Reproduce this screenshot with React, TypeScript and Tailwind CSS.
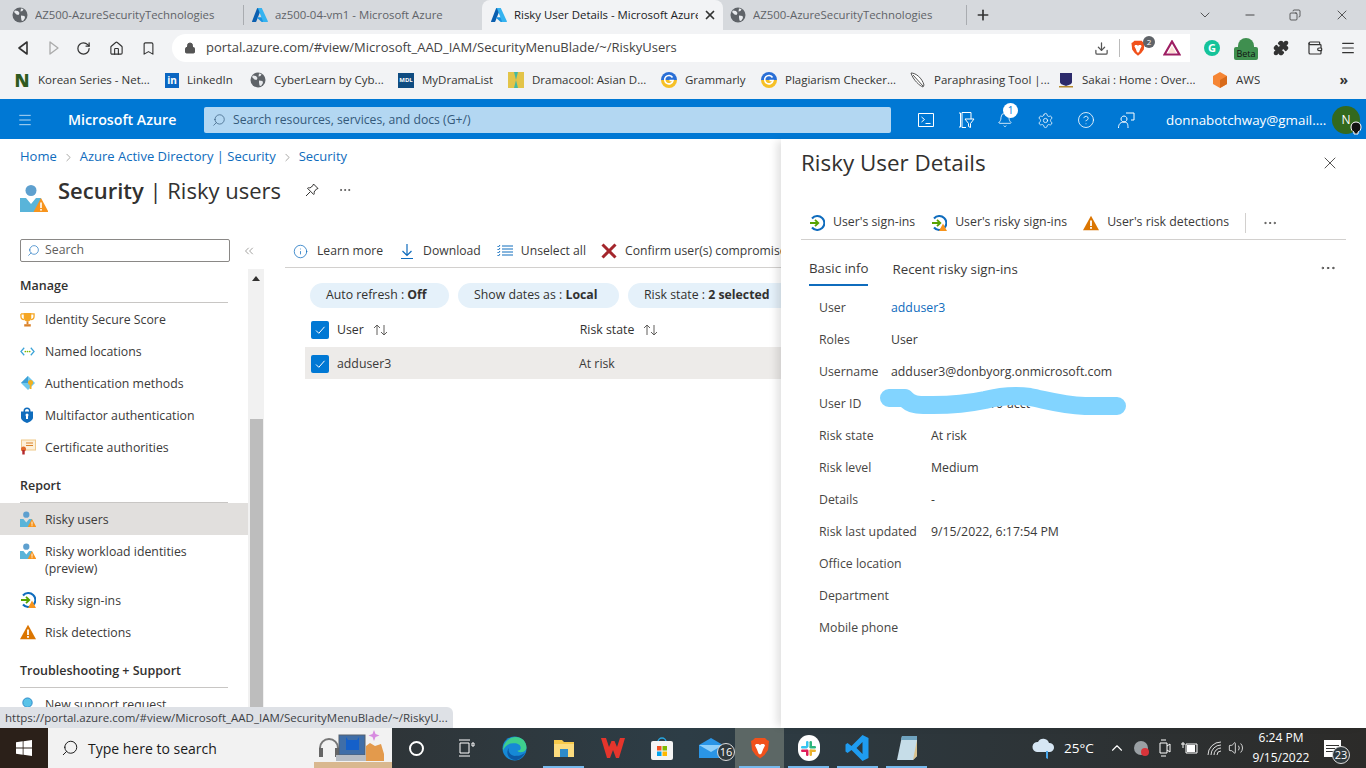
import React from "react";
import {
  Bell, Bookmark, ChevronDown, ChevronRight, ChevronsLeft, CircleHelp, Download, Ellipsis, Home, Info, Lock,
  Menu, Minus, Plus, Puzzle, RotateCw, Search, Settings, Wallet, X, ChevronUp, Volume2, Copy,
} from "lucide-react";

function AzureLogo({ size = 16 }: { size?: number }) {
  return (
    <svg width={size} height={size} viewBox="0 0 16 16" className="shrink-0">
      <path d="M5.6 1h4L4.3 14.6a.6.6 0 0 1-.6.4H.6a.5.5 0 0 1-.5-.7L5 1.4A.6.6 0 0 1 5.6 1z" fill="#0a5fb0" />
      <path d="M11.6 10.2H5.2a.3.3 0 0 0-.2.5l4.1 3.9c.2.2.4.3.6.3h5.7z" fill="#1b93e0" />
      <path d="M10 1.4a.6.6 0 0 0-.5-.4H5.5a.6.6 0 0 1 .5.4l5 13.2a.6.6 0 0 1-.5.4h4.9a.6.6 0 0 0 .5-.8z" fill="#35b3f0" />
    </svg>
  );
}

function GlobeIcon() {
  return (
    <svg width="16" height="16" viewBox="0 0 16 16" className="shrink-0">
      <circle cx="8" cy="8" r="7.5" fill="#5f6368" />
      <path d="M3 3.500l3 .5 1.500 2-1 2-2-.5-2.500-2.500zM9 1.500l2.500.5-1 2-2 .5zM9 8.500l3.500.5.500 2-2 3-1.500-.5-.5-3z" fill="#e8eaed" />
    </svg>
  );
}

function GrammarlyIcon() {
  return (
    <svg width="16" height="16" viewBox="0 0 16 16" className="shrink-0">
      <path d="M0 8a8 8 0 0 1 16 0z" fill="#2a6fd6" />
      <path d="M0 8a8 8 0 0 0 16 0z" fill="#f6c026" />
      <path d="M11.500 5.500A4.200 4.200 0 1 0 12 8.500H8.500" fill="none" stroke="#fff" strokeWidth="1.600" />
    </svg>
  );
}

function PersonRisk({ size = 18 }: { size?: number }) {
  return (
    <svg width={size} height={size} viewBox="0 0 28 28" className="shrink-0">
      <circle cx="11" cy="6.500" r="5.500" fill="#5ea0cf" />
      <path d="M0 28V14h6l5 6 5-6h5v4l-5 10z" fill="#59b4d9" />
      <path d="M21 14l7.500 14H13.500z" fill="#f7941d" />
      <rect x="20.200" y="18.500" width="1.600" height="5.500" fill="#fff" />
      <rect x="20.200" y="25" width="1.600" height="1.600" fill="#fff" />
    </svg>
  );
}

function Warning({ size = 16 }: { size?: number }) {
  return (
    <svg width={size} height={size} viewBox="0 0 16 16" className="shrink-0">
      <path d="M8 .8l8 14.400H0z" fill="#db7500" />
      <rect x="7.100" y="5.500" width="1.800" height="5.500" fill="#fff" />
      <rect x="7.100" y="12" width="1.800" height="1.800" fill="#fff" />
    </svg>
  );
}

function SignIn({ risky = false }: { risky?: boolean }) {
  return (
    <svg width="16" height="16" viewBox="0 0 16 16" className="shrink-0">
      <path d="M3 3.500A7 7 0 1 1 3 12.500" fill="none" stroke="#0f6cbd" strokeWidth="2" />
      <path d="M1 8h8M6 4.800L9.300 8 6 11.200" fill="none" stroke="#57a300" strokeWidth="1.800" />
      {risky && <path d="M12 8.500l4 7.500H8z" fill="#f7941d" />}
    </svg>
  );
}

function Trophy() {
  return (
    <svg width="15" height="15" viewBox="0 0 16 16" className="shrink-0">
      <path d="M1 2h14v2.500c0 2-1.500 3.500-3.500 3.500M1 2v2.500C1 6.500 2.500 8 4.500 8" fill="none" stroke="#f5a623" strokeWidth="1.400" />
      <path d="M4 1h8v5c0 2.200-1.800 4-4 4s-4-1.800-4-4z" fill="#f5a623" />
      <rect x="7" y="10" width="2" height="3" fill="#d9822b" />
      <rect x="4.500" y="13" width="7" height="2.500" fill="#d9822b" />
    </svg>
  );
}

function NamedLocations() {
  return (
    <svg width="15" height="15" viewBox="0 0 16 16" className="shrink-0">
      <path d="M4.500 4L1 8l3.500 4M11.500 4L15 8l-3.500 4" fill="none" stroke="#3ba3d8" strokeWidth="1.300" />
      <circle cx="5.700" cy="8" r=".9" fill="#7fba00" />
      <circle cx="8" cy="8" r=".9" fill="#7fba00" />
      <circle cx="10.300" cy="8" r=".9" fill="#7fba00" />
    </svg>
  );
}

function AuthMethods() {
  return (
    <svg width="16" height="16" viewBox="0 0 16 16" className="shrink-0">
      <path d="M8 1l7 7-7 7-7-7z" fill="#6fc8ee" />
      <path d="M8 1l-7 7h7z" fill="#3f9fd6" />
      <circle cx="10.500" cy="7.500" r="2.500" fill="#f2b01e" />
      <rect x="9.700" y="8" width="1.800" height="6" fill="#f2b01e" />
    </svg>
  );
}

function Mfa() {
  return (
    <svg width="14" height="16" viewBox="0 0 14 16" className="shrink-0">
      <path d="M7 .5a3.500 3.500 0 0 1 3.500 3.500v1H9V4a2 2 0 0 0-4 0v1H3.500V4A3.500 3.500 0 0 1 7 .5z" fill="#0f6cbd" />
      <path d="M1 4.500h12v6c0 2.500-3 4.500-6 5.500-3-1-6-3-6-5.500z" fill="#0f6cbd" />
      <circle cx="7" cy="8" r="1.500" fill="#fff" />
      <rect x="6" y="8.500" width="2" height="3.500" fill="#fff" />
    </svg>
  );
}

function Certificate() {
  return (
    <svg width="16" height="16" viewBox="0 0 16 16" className="shrink-0">
      <rect x="1.500" y="1" width="14" height="10" fill="#fdf0d8" stroke="#f0c98a" />
      <path d="M6 4h7M6 6.500h7" stroke="#d9822b" />
      <circle cx="3.500" cy="10" r="2.500" fill="#e06a2b" />
      <rect x="2.300" y="11" width="2.400" height="4.500" fill="#b4282d" />
    </svg>
  );
}

function Support() {
  return (
    <svg width="15" height="15" viewBox="0 0 16 16" className="shrink-0">
      <circle cx="8" cy="6" r="5" fill="#59c3e8" stroke="#2b88c8" />
      <path d="M2 16c0-3 2.500-5 6-5s6 2 6 5z" fill="#59c3e8" />
    </svg>
  );
}

function WindowsLogo() {
  return (
    <svg width="16" height="16" viewBox="0 0 16 16">
      <path d="M0 2.300L6.700 1.300V7.600H0zM7.500 1.200L16 0V7.600H7.500zM0 8.400H6.700V14.700L0 13.700zM7.500 8.400H16V16L7.500 14.800z" fill="#fff" />
    </svg>
  );
}

function BraveLion({ size = 20 }: { size?: number }) {
  return (
    <svg width={size} height={size} viewBox="0 0 20 22" className="shrink-0">
      <path d="M5 1h10l2 2 2 1-1 9-3.500 5L10 21.500 5.500 18 2 13 1 4l2-1z" fill="#f1511b" />
      <path d="M6 7l2.500 0 1.500 1 1.500-1H14l1 1.500-2 4-1.500 4-1.500 1-1.500-1-1.500-4-2-4z" fill="#fff" />
    </svg>
  );
}

const BOOKMARKS: { w: string; label: string; icon: React.ReactNode }[] = [
  {
    w: "w-[151px]", label: "Korean Series - Net...",
    icon: <span className="w-4 text-center font-black text-[18px] leading-4 text-[#2f5a20]">N</span>,
  },
  {
    w: "w-[85px]", label: "LinkedIn",
    icon: <span className="w-[14px] h-[15px] bg-[#0a66c2] text-white text-[10px] font-bold leading-[15px] text-center shrink-0">in</span>,
  },
  { w: "w-[148px]", label: "CyberLearn by Cyb...", icon: <GlobeIcon /> },
  {
    w: "w-[110px]", label: "MyDramaList",
    icon: <span className="w-4 h-[15px] bg-[#0f4c81] text-white text-[6px] font-bold leading-[15px] text-center shrink-0">MDL</span>,
  },
  {
    w: "w-[153px]", label: "Dramacool: Asian D...",
    icon: (
      <svg width="16" height="16" viewBox="0 0 16 16" className="shrink-0">
        <rect width="16" height="16" fill="#45b8a0" />
        <path d="M0 0h6l2 8-2 8H0zM16 0h-6L8 8l2 8h6z" fill="#e3c448" />
      </svg>
    ),
  },
  { w: "w-[100px]", label: "Grammarly", icon: <GrammarlyIcon /> },
  { w: "w-[149px]", label: "Plagiarism Checker...", icon: <GrammarlyIcon /> },
  {
    w: "w-[148px]", label: "Paraphrasing Tool |...",
    icon: (
      <svg width="16" height="16" viewBox="0 0 16 16" className="shrink-0">
        <path d="M1 1c5 0 11 5 13 12l-1 2C10 14 3 8 1 1zM3 3l10 11" fill="#fff" stroke="#555" />
      </svg>
    ),
  },
  {
    w: "w-[154px]", label: "Sakai : Home : Over...",
    icon: (
      <svg width="16" height="16" viewBox="0 0 16 16" className="shrink-0">
        <path d="M2 1h12v9c0 2-3 3-6 4-3-1-6-2-6-4z" fill="#2c2a6b" />
        <rect x="1" y="14" width="14" height="1.500" fill="#b68a2c" />
      </svg>
    ),
  },
  {
    w: "w-[70px]", label: "AWS",
    icon: (
      <svg width="16" height="16" viewBox="0 0 16 16" className="shrink-0">
        <path d="M8 0l7 4v8l-7 4-7-4V4z" fill="#f58534" />
        <path d="M8 8l7-4v8l-7 4z" fill="#d86a1a" />
      </svg>
    ),
  },
];

const MANAGE = [
  { label: "Identity Secure Score", icon: <Trophy /> },
  { label: "Named locations", icon: <NamedLocations /> },
  { label: "Authentication methods", icon: <AuthMethods /> },
  { label: "Multifactor authentication", icon: <Mfa /> },
  { label: "Certificate authorities", icon: <Certificate /> },
];

const DETAILS: { label: string; value?: string; link?: boolean }[] = [
  { label: "User", value: "adduser3", link: true },
  { label: "Roles", value: "User" },
  { label: "Username", value: "adduser3@donbyorg.onmicrosoft.com" },
  { label: "Risk state", value: "At risk" },
  { label: "Risk level", value: "Medium" },
  { label: "Details", value: "-" },
  { label: "Risk last updated", value: "9/15/2022, 6:17:54 PM" },
  { label: "Office location" },
  { label: "Department" },
  { label: "Mobile phone" },
];

function Tab({ title, active, azure, w, pad }: { title: string; active?: boolean; azure?: boolean; w: string; pad: string }) {
  return (
    <div className={`${w} ${pad} h-[30px] flex items-center shrink-0 ${active ? "bg-[#f2f3f5] rounded-t-lg text-[#202124]" : "text-[#5f6368]"}`}>
      {azure ? <AzureLogo /> : <GlobeIcon />}
      <span className="overflow-hidden whitespace-nowrap flex-1 text-[11.400px] ml-[7px]">{title}</span>
      {active && <X size={14} strokeWidth={3} className="mr-[6px] ml-[5px] text-[#333] shrink-0" />}
    </div>
  );
}

function MenuRow({ label, icon, active }: { label: string; icon: React.ReactNode; active?: boolean }) {
  return (
    <div className={`h-[32px] pl-[20px] flex items-center text-[12.300px] text-[#3b3a39] ${active ? "bg-[#e1dfdd]" : ""}`}>
      <span className="w-[25px] shrink-0 flex items-center">{icon}</span>
      <span className="mt-[2px]">{label}</span>
    </div>
  );
}

function SectionHead({ label, className }: { label: string; className: string }) {
  return (
    <div className={`ml-[20px] mr-[20px] h-[26px] border-b border-[#c8c6c4] text-[12.500px] font-semibold text-[#323130] flex items-start ${className}`}>
      {label}
    </div>
  );
}

function Pill({ label, value, w }: { label: string; value: string; w: string }) {
  return (
    <div className={`${w} h-[25px] pl-[16px] rounded-full bg-[#e5f1fa] flex items-center text-[12.300px] text-[#323130] shrink-0 whitespace-nowrap`}>
      {label} :&nbsp;<b className="font-bold">{value}</b>
    </div>
  );
}

function Check() {
  return (
    <span className="w-[18px] h-[18px] rounded-[2px] bg-[#0078d4] flex items-center justify-center shrink-0">
      <svg width="12" height="12" viewBox="0 0 12 12"><path d="M2 6.500L4.800 9.300 10.500 2.800" fill="none" stroke="#fff" strokeWidth="1" /></svg>
    </span>
  );
}

function SortArrows() {
  return (
    <svg width="18" height="14" viewBox="0 0 18 14" className="text-[#605e5c]">
      <path d="M5 12V2M2 5l3-3 3 3M12 2v10M9 9l3 3 3-3" fill="none" stroke="currentColor" strokeWidth="1" />
    </svg>
  );
}

function TaskItem({ children, active, running }: { children: React.ReactNode; active?: boolean; running?: boolean }) {
  return (
    <div className={`w-[49px] h-[40px] flex items-center justify-center shrink-0 relative ${active ? "bg-[#5c6765]" : ""}`}>
      {children}
      {running && <span className="absolute left-[4px] right-[4px] bottom-0 h-[2px] bg-[#76b9ed]" />}
    </div>
  );
}

export default function App() {
  return (
    <div className="w-[1366px] h-[768px] overflow-hidden relative flex flex-col bg-white text-[#323130] font-['Open_Sans',sans-serif]">
      {/* browser tabs */}
      <div className="h-[30px] bg-[#d6d9dd] flex items-center">
        <Tab w="w-[243px]" pad="pl-[12px]" title="AZ500-AzureSecurityTechnologies" />
        <span className="w-px h-[20px] bg-[#a9acb0]" />
        <Tab w="w-[238px]" pad="pl-[8px]" title="az500-04-vm1 - Microsoft Azure" azure />
        <Tab w="w-[241px]" pad="pl-[9px]" title="Risky User Details - Microsoft Azure" azure active />
        <Tab w="w-[243px]" pad="pl-[7px]" title="AZ500-AzureSecurityTechnologies" />
        <span className="w-px h-[20px] bg-[#a9acb0]" />
        <Plus size={16} strokeWidth={2.500} className="ml-[8px] text-[#333]" />
        <div className="ml-auto flex items-center text-[#333]">
          <ChevronDown size={16} strokeWidth={1.200} className="mr-[30px]" />
          <Minus size={14} strokeWidth={1.500} className="mr-[32px]" />
          <Copy size={12} strokeWidth={1.500} className="mr-[33px] -scale-x-100" />
          <X size={16} strokeWidth={1.200} className="mr-[16px]" />
        </div>
      </div>

      {/* address bar */}
      <div className="h-[36px] bg-[#f2f3f5] flex items-center">
        <div className="w-[172px] flex items-center text-[#333] shrink-0">
          <svg width="14" height="16" viewBox="0 0 14 16" className="ml-[16px]"><path d="M11 2L3 8l8 6z" fill="none" stroke="#333" strokeWidth="1.600" strokeLinejoin="round" /></svg>
          <svg width="14" height="16" viewBox="0 0 14 16" className="ml-[17px]"><path d="M3 2l8 6-8 6z" fill="none" stroke="#aaa" strokeWidth="1.300" strokeLinejoin="round" /></svg>
          <RotateCw size={15} strokeWidth={2} className="ml-[15px]" />
          <Home size={15} strokeWidth={1.800} className="ml-[18px]" />
          <Bookmark size={15} strokeWidth={1.800} className="ml-[17px]" />
        </div>
        <div className="w-[1018px] h-[28px] bg-white rounded-l-full rounded-r-lg flex items-center text-[13px] text-[#444]">
          <Lock size={12} fill="#555" className="ml-[12px] text-[#555]" />
          <span className="ml-[10px]">portal.azure.com/#view/Microsoft_AAD_IAM/SecurityMenuBlade/~/RiskyUsers</span>
          <Download size={15} className="ml-auto text-[#555]" />
          <span className="ml-[10px] w-px h-[18px] bg-[#bbb]" />
          <span className="ml-[10px] relative"><BraveLion size={16} />
            <span className="absolute -top-[4px] -right-[9px] w-[12px] h-[12px] rounded-full bg-[#5f6368] text-white text-[8px] leading-[12px] text-center">2</span>
          </span>
          <svg width="18" height="16" viewBox="0 0 18 16" className="ml-[17px] mr-[9px]"><path d="M9 1.500L16.500 14.500H1.500z" fill="none" stroke="#9e1f63" strokeWidth="2.200" /><path d="M9 6l4 7H5z" fill="#f15a29" fillOpacity=".2" /></svg>
        </div>
        <div className="flex-1 flex items-center text-[#333]">
          <span className="ml-[14px] w-[16px] h-[16px] rounded-full bg-[#15c39a] text-white text-[11px] font-bold leading-[16px] text-center">G</span>
          <span className="ml-[14px] relative w-[24px] h-[20px]">
            <span className="absolute left-[4px] top-0 w-[16px] h-[11px] rounded-t-full bg-[#3f8f4f]" />
            <span className="absolute left-0 top-[9px] w-[24px] h-[13px] bg-[#3f8f4f] rounded-[2px] text-[9px] leading-[13px] text-center text-[#111]">Beta</span>
          </span>
          <Puzzle size={16} fill="#333" className="ml-[15px]" />
          <Wallet size={16} strokeWidth={1.800} className="ml-[18px]" />
          <Menu size={16} strokeWidth={1.800} className="ml-[17px]" />
        </div>
      </div>

      {/* bookmarks */}
      <div className="h-[33px] pb-[5px] bg-[#f2f3f5] flex items-center pl-[14px] text-[11.500px] text-[#333]">
        {BOOKMARKS.map((b) => (
          <div key={b.label} className={`${b.w} flex items-center gap-[8px] shrink-0`}>
            {b.icon}
            <span className="truncate">{b.label}</span>
          </div>
        ))}
        <span className="ml-auto mr-[18px] font-bold text-[14px] leading-none">»</span>
      </div>

      {/* azure header */}
      <div className="h-[40px] pt-[2px] bg-[#0078d4] flex items-center text-white shrink-0">
        <Menu size={16} strokeWidth={1.500} className="ml-[17px] text-[#b3d7f2]" />
        <span className="ml-[35px] w-[136px] text-[14.200px] font-semibold">Microsoft Azure</span>
        <div className="w-[687px] h-[26px] bg-[#b3d7f2] rounded-[2px] flex items-center text-[12.200px] text-[#34597a]">
          <Search size={14} strokeWidth={1.200} className="ml-[8px] -scale-x-100" />
          <span className="ml-[7px]">Search resources, services, and docs (G+/)</span>
        </div>
        <svg width="16" height="16" viewBox="0 0 16 16" className="ml-[27px]"><path d="M.5 1.500h15v13H.5zM3.500 5l3 2.500-3 2.500M7.500 11.500h5" fill="none" stroke="#fff" /></svg>
        <svg width="18" height="18" viewBox="0 0 18 18" className="ml-[23px]"><path d="M2 2h1.500v14H2M5 1.500h9V8M5 16.500h4M5 1.500v15M8 8h9l-3.500 4.500v4l-2-1v-3z" fill="none" stroke="#fff" /></svg>
        <span className="ml-[22px] relative">
          <Bell size={16} strokeWidth={1.200} />
          <span className="absolute -top-[9px] left-[6px] w-[15px] h-[15px] rounded-full bg-white text-[#0078d4] text-[10px] leading-[15px] text-center">1</span>
        </span>
        <Settings size={17} strokeWidth={1.100} className="ml-[24px]" />
        <CircleHelp size={18} strokeWidth={1.100} className="ml-[23px]" />
        <svg width="18" height="18" viewBox="0 0 18 18" className="ml-[22px]"><path d="M9 2h8v7h-3M7 5a3 3 0 1 1-.01 0M1.500 17c0-4 2-6 5.500-6s4 2 4 6" fill="none" stroke="#fff" /></svg>
        <span className="ml-[31px] w-[166px] text-[13.400px] font-medium whitespace-nowrap">donnabotchway@gmail....</span>
        <span className="relative w-[28px] h-[28px] rounded-full bg-[#33691e] text-[12px] leading-[28px] text-center shrink-0">N
          <svg width="14" height="14" viewBox="0 0 14 14" className="absolute left-[17px] top-[15px]"><path d="M7 1C4 1 2 3 2 6c0 3 1.500 4.500 3 5v2h4v-2c1.500-.5 3-2 3-5 0-3-2-5-5-5z" fill="#111" stroke="#fff" /></svg>
        </span>
      </div>

      {/* main area */}
      <div className="flex-1 min-h-0 flex relative">
        <div className="w-[781px] shrink-0 overflow-hidden">
          <div className="pl-[20px] h-[36px] flex items-center gap-[5px] text-[13px] text-[#0f6cbd]">
            <span>Home</span>
            <ChevronRight size={13} strokeWidth={1} className="text-[#605e5c]" />
            <span>Azure Active Directory | Security</span>
            <ChevronRight size={13} strokeWidth={1} className="text-[#605e5c]" />
            <span>Security</span>
          </div>
          <div className="pl-[20px] h-[30px] flex items-center">
            <span className="mt-[16px]"><PersonRisk size={28} /></span>
            <span className="ml-[10px] text-[22px] text-[#323130] whitespace-nowrap"><b className="font-semibold">Security</b> | Risky users</span>
            <svg width="14" height="14" viewBox="0 0 14 14" className="ml-[24px]"><path d="M8.500 1l4.500 4.500-1.500.5L9 9c.5 1 .3 2-.3 2.500L2.500 5.300C3 4.700 4 4.500 5 5l3-2.500zM5 9l-4 4" fill="none" stroke="#323130" /></svg>
            <Ellipsis size={14} strokeWidth={1.200} className="ml-[19px] text-[#323130]" />
          </div>

          <div className="flex h-[523px]">
            {/* resource menu */}
            <div className="w-[264px] shrink-0 overflow-hidden">
              <div className="flex items-center mt-[34px] pl-[20px]">
                <div className="w-[210px] h-[23px] border border-[#8a8886] rounded-[2px] flex items-center text-[12.300px] text-[#605e5c]">
                  <Search size={13} strokeWidth={1.200} className="ml-[6px] -scale-x-100 text-[#0f6cbd]" />
                  <span className="ml-[5px]">Search</span>
                </div>
                <ChevronsLeft size={14} strokeWidth={1} className="ml-[12px] text-[#605e5c]" />
              </div>
              <div className="flex mt-[7px]">
                <div className="w-[248px] shrink-0">
                  <SectionHead label="Manage" className="mt-[8px]" />
                  {MANAGE.map((m) => <MenuRow key={m.label} {...m} />)}
                  <SectionHead label="Report" className="mt-[14px]" />
                  <MenuRow label="Risky users" icon={<PersonRisk size={16} />} active />
                  <div className="h-[49px] pl-[20px] flex text-[12.300px] text-[#3b3a39] leading-[17px] pt-[8px]">
                    <span className="w-[25px] shrink-0"><PersonRisk size={16} /></span>
                    <span>Risky workload identities<br />(preview)</span>
                  </div>
                  <MenuRow label="Risky sign-ins" icon={<SignIn risky />} />
                  <MenuRow label="Risk detections" icon={<Warning />} />
                  <SectionHead label="Troubleshooting + Support" className="mt-[14px]" />
                  <MenuRow label="New support request" icon={<Support />} />
                </div>
                <div className="w-[16px] h-[459px] bg-[#f1f1f1] flex flex-col items-center shrink-0">
                  <span className="mt-[7px] border-x-[4px] border-x-transparent border-b-[5px] border-b-[#323130]" />
                  <span className="mt-[138px] w-[13px] flex-1 bg-[#bdbdbd]" />
                </div>
              </div>
            </div>

            {/* blade content */}
            <div className="flex-1 min-w-0 pl-[21px] overflow-hidden">
              <div className="h-[63px] pt-[30px] border-b border-[#d2d0ce] flex items-center text-[12.200px] text-[#3b3a39] whitespace-nowrap">
                <Info size={15} strokeWidth={1.200} className="ml-[8px] text-[#0f6cbd] shrink-0" />
                <span className="ml-[9px]">Learn more</span>
                <svg width="14" height="17" viewBox="0 0 14 17" className="ml-[17px] shrink-0"><path d="M7 1v11M2.500 8L7 12.500 11.500 8M1 15.500h12" fill="none" stroke="#0f6cbd" strokeWidth="1.200" /></svg>
                <span className="ml-[9px]">Download</span>
                <svg width="16" height="14" viewBox="0 0 16 14" className="ml-[16px] shrink-0"><path d="M5 2h11M5 5h11M5 8h11M5 11h11M.5 2l1 1 1.500-2M.5 5l1 1 1.500-2M.5 8l1 1 1.500-2M.5 11l1 1 1.500-2" fill="none" stroke="#0f6cbd" /></svg>
                <span className="ml-[8px]">Unselect all</span>
                <svg width="16" height="16" viewBox="0 0 16 16" className="ml-[15px] shrink-0"><path d="M1.500 1.500l13 13M14.500 1.500l-13 13" stroke="#a4262c" strokeWidth="3" /></svg>
                <span className="ml-[8px]">Confirm user(s) compromised</span>
              </div>
              <div className="flex mt-[15px] ml-[25px] gap-[9px]">
                <Pill w="w-[139px]" label="Auto refresh" value="Off" />
                <Pill w="w-[161px]" label="Show dates as" value="Local" />
                <Pill w="w-[170px]" label="Risk state" value="2 selected" />
              </div>
              <div className="h-[39px] pt-[5px] ml-[26px] flex items-center text-[12.300px]">
                <Check />
                <span className="ml-[8px] font-medium">User</span>
                <span className="ml-[8px] w-[208px]"><SortArrows /></span>
                <span className="font-medium">Risk state</span>
                <span className="ml-[8px]"><SortArrows /></span>
              </div>
              <div className="h-[32px] pt-[2px] ml-[20px] bg-[#edebe9] flex items-center pl-[6px] text-[12.300px]">
                <Check />
                <span className="ml-[8px] w-[242px] text-[#3b3a39]">adduser3</span>
                <span className="text-[#3b3a39]">At risk</span>
              </div>
            </div>
          </div>
        </div>

        {/* details panel */}
        <div className="flex-1 min-w-0 bg-white shadow-[-6px_0_8px_-2px_rgba(0,0,0,0.12)] pl-[20px] pr-[20px] relative z-10">
          <div className="h-[48px] flex items-center justify-between">
            <span className="text-[22.400px] font-medium text-[#323130]">Risky User Details</span>
            <X size={20} strokeWidth={1} className="mr-[6px] text-[#323130]" />
          </div>
          <div className="h-[54px] mt-[-1px] pt-[20px] border-b border-[#d2d0ce] flex items-center text-[12.300px] text-[#3b3a39] whitespace-nowrap pl-[8px]">
            <SignIn />
            <span className="ml-[8px]">User's sign-ins</span>
            <span className="ml-[16px]"><SignIn risky /></span>
            <span className="ml-[8px]">User's risky sign-ins</span>
            <span className="ml-[16px]"><Warning /></span>
            <span className="ml-[8px]">User's risk detections</span>
            <span className="ml-[16px] w-px h-[20px] bg-[#d2d0ce]" />
            <Ellipsis size={16} strokeWidth={1.200} className="ml-[16px]" />
          </div>
          <div className="h-[46px] flex items-center text-[13.300px] text-[#3b3a39] pl-[8px] mr-[-2px]">
            <span className="h-[46px] pt-[14px] flex items-center border-b-2 border-[#0f6cbd] font-medium">Basic info</span>
            <span className="ml-[24px] mt-[14px]">Recent risky sign-ins</span>
            <Ellipsis size={18} strokeWidth={1.200} className="ml-auto mr-[11px] mt-[10px]" />
          </div>
          <div className="pl-[18px] pt-[6px] text-[12.300px] text-[#3b3a39] relative">
            {DETAILS.slice(0, 3).map((d) => (
              <div key={d.label} className="h-[32px] flex items-center">
                <span className="w-[72px] shrink-0 text-[#484644]">{d.label}</span>
                <span className={d.link ? "text-[#0f6cbd]" : ""}>{d.value}</span>
              </div>
            ))}
            <div className="h-[32px] flex items-center">
              <span className="w-[72px] shrink-0 text-[#484644]">User ID</span>
              <span className="ml-[100px]">r0-acct</span>
            </div>
            {DETAILS.slice(3).map((d) => (
              <div key={d.label} className="h-[32px] flex items-center">
                <span className="w-[112px] shrink-0 text-[#484644] whitespace-nowrap">{d.label}</span>
                <span>{d.value}</span>
              </div>
            ))}
            {/* scribble hiding the user id */}
            <svg width="270" height="50" viewBox="0 0 270 50" className="absolute left-[70px] top-[90px]" fill="none">
              <path d="M18 22L34 22C40 30 50 29 62 29C80 29 100 27 114 24C130 20 145 19 159 21C175 24 190 29 214 30L246 30" stroke="#82d4ff" strokeWidth="18" strokeLinecap="round" strokeLinejoin="round" />
            </svg>
          </div>
        </div>

        {/* status tooltip */}
        <div className="absolute left-0 bottom-0 w-[453px] h-[21px] bg-[#dee1e6] rounded-tr-md pl-[5px] flex items-center text-[11.500px] text-[#3c4043] z-20 whitespace-nowrap">
          https://portal.azure.com/#view/Microsoft_AAD_IAM/SecurityMenuBlade/~/RiskyU...
        </div>
      </div>

      {/* windows taskbar */}
      <div className="h-[40px] shrink-0 flex items-center text-white bg-gradient-to-r from-[#2f2a26] via-[#2d3d46] to-[#2c2b29]">
        <div className="w-[48px] h-full bg-[#2b2019] flex items-center justify-center"><WindowsLogo /></div>
        <div className="w-[344px] h-full bg-[#f2f2f2] flex items-center text-[#1a1a1a] text-[14px]">
          <Search size={18} strokeWidth={1.300} className="ml-[13px] -scale-x-100" />
          <span className="ml-[9px]">Type here to search</span>
          <svg width="78" height="40" viewBox="0 0 78 40" className="ml-auto">
            <rect x="0" y="34" width="78" height="6" fill="#d9b88f" />
            <path d="M6 20a9 9 0 0 1 18 0" fill="none" stroke="#777" strokeWidth="2" />
            <rect x="5" y="20" width="4" height="9" fill="#666" /><rect x="21" y="20" width="4" height="9" fill="#666" />
            <rect x="25" y="7" width="26" height="20" fill="#3f6ea8" stroke="#56616d" />
            <path d="M32 9l2 3h9l2-3v13H32z" fill="#1560c9" />
            <rect x="22" y="27" width="33" height="6" fill="#b6bcc4" />
            <path d="M52 33V18l4-3 5 3 6-2 3 10v7z" fill="#e39a4c" />
            <path d="M60 2l1.500 4 4 1.500-4 1.500L60 13l-1.500-4-4-1.500 4-1.500z" fill="#d78be0" />
          </svg>
        </div>
        <TaskItem><span className="w-[15px] h-[15px] rounded-full border-[2.500px] border-white" /></TaskItem>
        <TaskItem>
          <svg width="18" height="18" viewBox="0 0 18 18"><path d="M2 1h11M2 17h11M3 4h9v10H3zM15 4h2v3h-2z" fill="none" stroke="#fff" /></svg>
        </TaskItem>
        <TaskItem>
          <svg width="25" height="25" viewBox="0 0 24 24">
            <circle cx="12" cy="12" r="11.500" fill="#1689d6" />
            <path d="M1 14C1 6 7 1 13 1c6 0 10.500 4 10.500 10 0 3-2.500 4.500-5.500 4.500-2 0-3-.5-3-1.500 2 0 3-1 3-2.500 0-3-3-4.500-6-4.500C7 6.500 3 9 1 14z" fill="#3ecf8e" />
            <path d="M9 22c-4-2-5-7-2.500-10.500C5.500 16 9 20 14 19c3 0 6-1 8-3-2 5-8 9-13 6z" fill="#0c59a4" />
          </svg>
        </TaskItem>
        <TaskItem running>
          <svg width="22" height="20" viewBox="0 0 22 20"><path d="M1 2h8l2 2h10v15H1z" fill="#f7c94b" /><rect x="1" y="6" width="20" height="13" fill="#fbdc7f" /><rect x="7" y="11" width="8" height="8" fill="#2e8bc9" /></svg>
        </TaskItem>
        <TaskItem>
          <svg width="24" height="22" viewBox="0 0 24 22"><path d="M0 1h5l3 9 2.500-6h3l2.500 6 3-9h5l-6 20h-3l-3-8-3 8H6z" fill="#e5352c" /></svg>
        </TaskItem>
        <TaskItem>
          <svg width="22" height="24" viewBox="0 0 22 24">
            <path d="M7 6a4 4 0 0 1 8 0" fill="none" stroke="#27a7e0" strokeWidth="1.500" />
            <rect x="0" y="5" width="22" height="19" rx="2" fill="#f4f4f4" />
            <rect x="6" y="10" width="4.500" height="4.500" fill="#f25022" /><rect x="11.500" y="10" width="4.500" height="4.500" fill="#7fba00" />
            <rect x="6" y="15.500" width="4.500" height="4.500" fill="#00a4ef" /><rect x="11.500" y="15.500" width="4.500" height="4.500" fill="#ffb900" />
          </svg>
        </TaskItem>
        <TaskItem>
          <svg width="24" height="20" viewBox="0 0 24 20"><path d="M0 7L12 0l12 7v13H0z" fill="#2a95e6" /><path d="M0 7l12 7 12-7" fill="#8fd0fa" /></svg>
          <span className="absolute left-[31px] top-[15px] w-[18px] h-[18px] rounded-full border border-[#ddd] bg-[#30393d] text-[11px] leading-[16px] text-center">16</span>
        </TaskItem>
        <TaskItem active running><BraveLion size={22} /></TaskItem>
        <TaskItem running>
          <span className="w-[22px] h-[26px] rounded-full bg-white flex items-center justify-center">
            <svg width="15" height="15" viewBox="0 0 15 15">
              <rect x="5" y="0" width="2.500" height="6.500" rx="1.200" fill="#36c5f0" /><rect x="0" y="5" width="6.500" height="2.500" rx="1.200" fill="#36c5f0" />
              <rect x="8.500" y="0" width="2.500" height="6.500" rx="1.200" fill="#2eb67d" /><rect x="8.500" y="5" width="6.500" height="2.500" rx="1.200" fill="#2eb67d" />
              <rect x="8.500" y="8.500" width="2.500" height="6.500" rx="1.200" fill="#ecb22e" /><rect x="8.500" y="8.500" width="6.500" height="2.500" rx="1.200" fill="#ecb22e" />
              <rect x="5" y="8.500" width="2.500" height="6.500" rx="1.200" fill="#e01e5a" /><rect x="0" y="8.500" width="6.500" height="2.500" rx="1.200" fill="#e01e5a" />
            </svg>
          </span>
        </TaskItem>
        <TaskItem running>
          <svg width="25" height="28" viewBox="0 0 24 28"><path d="M17 1l6 3v20l-6 3L6 16l-4 3-2-1.500v-7L2 9l4 3zM17 8l-6 6 6 6z" fill="#1f9cf0" /></svg>
        </TaskItem>
        <TaskItem running>
          <svg width="22" height="26" viewBox="0 0 22 26"><path d="M6 1h15v20l-4 4H1z" fill="#c6dde8" /><path d="M17 25l4-4V5z" fill="#d9c28e" /><path d="M6 1h15v4H5z" fill="#6fa3bf" /></svg>
        </TaskItem>
        <div className="ml-auto flex items-center h-full">
          <svg width="24" height="24" viewBox="0 0 24 24"><path d="M5 16a5 5 0 0 1 1-10 6 6 0 0 1 11 1 4.500 4.500 0 0 1 1 9z" fill="#d6e6f4" /><path d="M14 15v7l2 1v-8z" fill="#4aa8ec" /></svg>
          <span className="ml-[8px] text-[13.500px] w-[32px] whitespace-nowrap">25°C</span>
          <ChevronUp size={18} strokeWidth={1.500} className="ml-[12px] text-white" />
          <span className="ml-[8px] relative w-[14px] h-[14px] rounded-full bg-[#9aa0a4]"><span className="absolute left-[7px] top-[7px] w-[8px] h-[8px] rounded-full bg-[#d9343a]" /></span>
          <svg width="14" height="20" viewBox="0 0 14 20" className="ml-[10px]"><path d="M2 5h7v10H2zM9 8l3-2v8l-3-2M3 2h5M3 18h5" fill="none" stroke="#fff" /></svg>
          <svg width="18" height="14" viewBox="0 0 18 14" className="ml-[8px]"><path d="M1 3h4M3 1v6M6 3h11v9H6z" fill="none" stroke="#fff" /><rect x="7" y="4" width="8" height="7" fill="#fff" /></svg>
          <svg width="16" height="16" viewBox="0 0 16 16" className="ml-[8px]"><path d="M2 15a13 13 0 0 1 13-13M5 15A10 10 0 0 1 15 5M8 15a7 7 0 0 1 7-7M11 15a4 4 0 0 1 4-4" fill="none" stroke="#ddd" /></svg>
          <Volume2 size={16} strokeWidth={1.200} className="ml-[6px]" />
          <div className="ml-[5px] w-[64px] text-center text-[12px] leading-[20px]">
            <div>6:24 PM</div>
            <div>9/15/2022</div>
          </div>
          <span className="ml-[11px] mr-[25px] relative w-[17px] h-[17px] bg-white flex flex-col justify-center gap-[2px] px-[2px]">
            <span className="h-px bg-[#333]" /><span className="h-px bg-[#333]" /><span className="h-px bg-[#333]" />
            <span className="absolute left-[8px] top-[6px] w-[18px] h-[18px] rounded-full border border-[#ddd] bg-[#30393d] text-white text-[11px] leading-[16px] text-center">23</span>
          </span>
        </div>
      </div>
    </div>
  );
}
